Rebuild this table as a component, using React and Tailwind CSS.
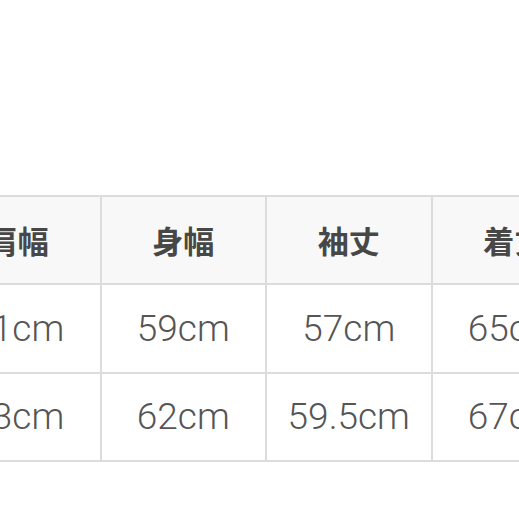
const headers = ["肩幅", "身幅", "袖丈", "着丈", "裄丈"];
const rows = [
  ["51cm", "59cm", "57cm", "65cm", "85cm"],
  ["53cm", "62cm", "59.5cm", "67cm", "88cm"],
];

export default function App() {
  return (
    <div className="w-[519px] h-[519px] overflow-hidden bg-white">
      <div className="pt-[195px] ml-[-66px]">
        <table className="table-fixed border-collapse w-[828px]">
          <thead>
            <tr className="h-[88px] bg-[#f8f8f8]">
              {headers.map((h) => (
                <th
                  key={h}
                  className="w-[165.5px] border-2 border-[#dcdcdc] text-[31px] font-bold text-[#474747] text-center"
                  style={{ fontFamily: '"Noto Sans CJK JP", sans-serif' }}
                >
                  {h}
                </th>
              ))}
            </tr>
          </thead>
          <tbody>
            {rows.map((r, i) => (
              <tr key={i} className={i === 0 ? "h-[89px]" : "h-[88px]"}>
                {r.map((v, j) => (
                  <td
                    key={j}
                    className="border-2 border-[#dcdcdc] text-[37px] font-light text-[#555] text-center"
                    style={{ fontFamily: "Roboto, sans-serif" }}
                  >
                    {v}
                  </td>
                ))}
              </tr>
            ))}
          </tbody>
        </table>
      </div>
    </div>
  );
}
